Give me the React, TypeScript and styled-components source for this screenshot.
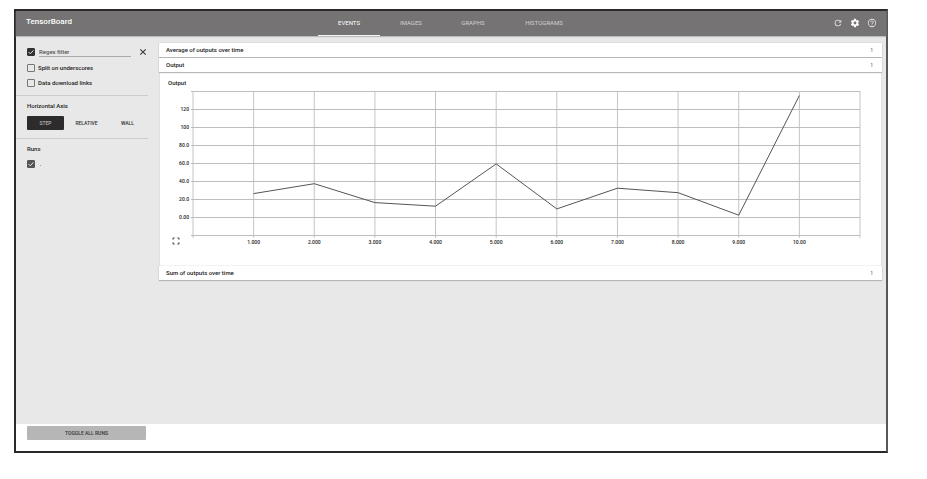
import React, { useState } from "react";
import styled, { createGlobalStyle } from "styled-components";

const Global = createGlobalStyle`
  * { box-sizing: border-box; }
  body { margin: 0; background: #fff; font-family: Roboto, "Liberation Sans", sans-serif; color: #222; -webkit-font-smoothing: antialiased; }
  button, input { font: inherit; color: inherit; margin: 0; padding: 0; border: 0; background: none; }
`;

const Frame = styled.div`
  display: flex;
  flex-direction: column;
  min-height: calc(100vh - 35px);
  margin: 9px 39px 26px 14px;
  border: 2px solid #2b2829;
  border-right-color: #58585a;
`;

const Header = styled.header`
  position: relative;
  display: grid;
  grid-template-columns: 302px 1fr auto;
  height: 25px;
  background: #757373;
  box-shadow: 0 1px 1px #bbb;
  color: #fff;
`;

const Brand = styled.h1`
  margin: 0;
  padding-left: 10px;
  font-size: 8px;
  font-weight: 500;
  line-height: 22px;
`;

const Tabs = styled.nav`
  display: flex;
`;

const Tab = styled.button<{ $active: boolean; $wide?: boolean }>`
  width: ${(p) => (p.$wide ? 80 : 62)}px;
  padding-bottom: 1px;
  border-bottom: 1px solid ${(p) => (p.$active ? "#f4f4f4" : "transparent")};
  color: ${(p) => (p.$active ? "#fff" : "#d2d1d1")};
  font-size: 6px;
  font-weight: 400;
`;

const Actions = styled.div`
  display: flex;
  align-items: center;
  gap: 7px;
  padding: 0 9px 2px 0;
`;

const IconButton = styled.button`
  display: flex;
  svg { display: block; width: 10px; height: 10px; }
`;

const Main = styled.div`
  flex: 1;
  display: grid;
  grid-template-columns: 132px minmax(0, 1fr);
  gap: 11px;
  padding-right: 4px;
  background: #e8e8e8;
`;

const Sidebar = styled.aside`
  font-size: 6px;
  font-weight: 500;
`;

const Section = styled.section`
  padding: 6px 0 0 11px;
  border-bottom: 1px solid #cdcdcd;
  &:first-child { padding: 10px 0 2px 11px; }
  &:last-child { border-bottom: 0; }
`;

const FilterRow = styled.div`
  display: flex;
  align-items: center;
  height: 11px;
  margin-bottom: 6px;
`;

const RegexInput = styled.input`
  width: 95px;
  height: 11px;
  margin: 0 7px 0 4px;
  border-bottom: 1px solid #aaa;
  outline: 0;
  &::placeholder { color: #555; opacity: 1; }
`;

const CheckRow = styled.label`
  display: flex;
  align-items: center;
  gap: 3px;
  height: 9px;
  margin-bottom: 6px;
`;

const Check = styled.input<{ $tone?: string }>`
  appearance: none;
  flex: none;
  width: 8px;
  height: 8px;
  border: 1px solid #777;
  border-radius: 1px;
  &:checked {
    border-color: ${(p) => p.$tone || "#333"};
    background: ${(p) => p.$tone || "#333"}
      url("data:image/svg+xml,%3Csvg xmlns='http://www.w3.org/2000/svg' viewBox='0 0 6 6'%3E%3Cpath d='M.6 3.1 2.2 4.7 5.5 1.4' fill='none' stroke='white' stroke-width='.9'/%3E%3C/svg%3E");
  }
`;

const Heading = styled.h2`
  margin: 0 0 6px;
  font-size: 6px;
  font-weight: 500;
  line-height: 8px;
`;

const AxisGroup = styled.div`
  display: flex;
  gap: 4px;
  margin-bottom: 8px;
`;

const AxisButton = styled.button<{ $active: boolean }>`
  width: 37px;
  height: 14px;
  border-radius: 1px;
  background: ${(p) => (p.$active ? "#2e2b2c" : "transparent")};
  color: ${(p) => (p.$active ? "#ccc" : "#333")};
  font-size: 5px;
  font-weight: ${(p) => (p.$active ? 400 : 500)};
`;

const Content = styled.main`
  padding-top: 7px;
`;

const Category = styled.button`
  position: relative;
  display: flex;
  justify-content: space-between;
  align-items: center;
  width: 100%;
  height: 14px;
  margin-bottom: 1px;
  padding: 0 9px 1px 7px;
  background: #fff;
  box-shadow: 0 0 1px #b0b0b0, 0 1px 1px #b8b8b8;
  font-size: 6px;
  font-weight: 500;
`;

const Count = styled.span`
  color: #777;
  font-size: 5px;
`;

const ChartCard = styled.section`
  height: 193px;
  margin: 0 1px;
  padding: 6px 21px 0 8px;
  background: #fff;
  box-shadow: 0 0 1px #bbb;
`;

const ChartTitle = styled.h3`
  margin: 0 0 4px;
  font-size: 6px;
  font-weight: 500;
  line-height: 8px;
`;

const ChartBody = styled.div`
  display: grid;
  grid-template-columns: 25px minmax(0, 1fr);
  color: #222;
`;

const YAxis = styled.div`
  display: flex;
  flex-direction: column;
  padding: 9px 4px 0 0;
  text-align: right;
  font-size: 5px;
  font-weight: 500;
  line-height: 18px;
  button { margin: 11px 0 0 4px; }
  svg { width: 8px; height: 8px; }
`;

const Plot = styled.svg`
  display: block;
  width: 100%;
  height: 160px;
  overflow: visible;
  line, polyline { vector-effect: non-scaling-stroke; }
  text { font-size: 5px; font-weight: 500; fill: #222; text-anchor: middle; }
`;

const Footer = styled.footer`
  height: 27px;
  padding: 2px 11px;
`;

const ToggleButton = styled.button`
  display: block;
  width: 119px;
  height: 14px;
  border-radius: 1px;
  background: #b6b6b6;
  color: #333;
  font-size: 5px;
  font-weight: 500;
`;

const RefreshIcon = () => (
  <svg viewBox="0 0 24 24" fill="#e2e2e2"><path d="M17.65 6.35A7.96 7.96 0 0 0 12 4a8 8 0 1 0 7.73 10h-2.08A6 6 0 1 1 12 6c1.66 0 3.14.69 4.22 1.78L13 11h7V4z" /></svg>
);
const GearIcon = () => (
  <svg viewBox="0 0 24 24" fill="#fff"><path d="M19.43 12.98c.04-.32.07-.64.07-.98s-.03-.66-.07-.98l2.11-1.65c.19-.15.24-.42.12-.64l-2-3.46c-.12-.22-.39-.3-.61-.22l-2.49 1c-.52-.4-1.08-.73-1.69-.98l-.38-2.65A.49.49 0 0 0 14 2h-4c-.25 0-.46.18-.49.42l-.38 2.65c-.61.25-1.17.59-1.69.98l-2.49-1c-.23-.09-.49 0-.61.22l-2 3.46c-.13.22-.07.49.12.64l2.11 1.65c-.04.32-.07.65-.07.98s.03.66.07.98l-2.11 1.65c-.19.15-.24.42-.12.64l2 3.46c.12.22.39.3.61.22l2.49-1c.52.4 1.08.73 1.69.98l.38 2.65c.03.24.24.42.49.42h4c.25 0 .46-.18.49-.42l.38-2.65c.61-.25 1.17-.59 1.69-.98l2.49 1c.23.09.49 0 .61-.22l2-3.46c.12-.22.07-.49-.12-.64zM12 15.5a3.5 3.5 0 1 1 0-7 3.5 3.5 0 0 1 0 7z" /></svg>
);
const HelpIcon = () => (
  <svg viewBox="0 0 24 24" fill="#e2e2e2"><path d="M11 18h2v-2h-2zm1-16a10 10 0 1 0 0 20 10 10 0 0 0 0-20zm0 18a8 8 0 1 1 0-16 8 8 0 0 1 0 16zm0-14a4 4 0 0 0-4 4h2a2 2 0 1 1 4 0c0 2-3 1.75-3 5h2c0-2.25 3-2.5 3-5a4 4 0 0 0-4-4z" /></svg>
);
const CloseIcon = () => (
  <svg viewBox="0 0 24 24" fill="none" stroke="#333" strokeWidth="2.5"><path d="M5.5 5.5l13 13M18.5 5.5l-13 13" /></svg>
);
const ExpandIcon = () => (
  <svg viewBox="0 0 24 24" fill="none" stroke="#222" strokeWidth="2.5"><path d="M3 8V3h5M16 3h5v5M21 16v5h-5M8 21H3v-5" /></svg>
);

const tabs = ["EVENTS", "IMAGES", "GRAPHS", "HISTOGRAMS"];
const axes = ["STEP", "RELATIVE", "WALL"];
const yLabels = ["120", "100", "80.0", "60.0", "40.0", "20.0", "0.00"];
const values = [26, 37, 16, 12, 59, 9, 32, 27, 2, 135];
const steps = values.map((_, i) => i + 1);
const X_MAX = 11;
const PLOT_HEIGHT = 144;
const toY = (value: number) => ((140 - value) * PLOT_HEIGHT) / 160;
const toX = (step: number) => `${(step / X_MAX) * 100}%`;

function OutputChart() {
  return (
    <Plot role="img" aria-label="Output by step">
      {[0, ...steps, X_MAX].map((s) => (
        <line key={s} x1={toX(s)} x2={toX(s)} y1="0" y2="147" stroke="#c4c4c4" />
      ))}
      {Array.from({ length: 9 }, (_, i) => (
        <line key={i} x1="-2" x2="100%" y1={i * 18 + 0.5} y2={i * 18 + 0.5} stroke="#bdbdbd" />
      ))}
      <svg width="100%" height={PLOT_HEIGHT} viewBox={`0 0 ${X_MAX} ${PLOT_HEIGHT}`} preserveAspectRatio="none">
        <polyline points={values.map((v, i) => `${i + 1},${toY(v)}`).join(" ")} fill="none" stroke="#555" />
      </svg>
      {steps.map((s) => (
        <text key={s} x={toX(s)} y="153">{s === 10 ? "10.00" : `${s}.000`}</text>
      ))}
    </Plot>
  );
}

export default function App() {
  const [tab, setTab] = useState("EVENTS");
  const [axis, setAxis] = useState("STEP");
  const [filter, setFilter] = useState("");
  const [run, setRun] = useState(true);
  return (
    <>
      <Global />
      <Frame>
        <Header>
          <Brand>TensorBoard</Brand>
          <Tabs>
            {tabs.map((t) => (
              <Tab key={t} $active={t === tab} $wide={t === "HISTOGRAMS"} onClick={() => setTab(t)}>{t}</Tab>
            ))}
          </Tabs>
          <Actions>
            <IconButton aria-label="Refresh"><RefreshIcon /></IconButton>
            <IconButton aria-label="Settings"><GearIcon /></IconButton>
            <IconButton aria-label="Help"><HelpIcon /></IconButton>
          </Actions>
        </Header>
        <Main>
          <Sidebar>
            <Section>
              <FilterRow>
                <Check type="checkbox" defaultChecked aria-label="Enable regex filter" />
                <RegexInput aria-label="Regex filter" placeholder="Regex filter" value={filter} onChange={(e) => setFilter(e.target.value)} />
                <IconButton aria-label="Clear filter" onClick={() => setFilter("")}><CloseIcon /></IconButton>
              </FilterRow>
              <CheckRow><Check type="checkbox" />Split on underscores</CheckRow>
              <CheckRow><Check type="checkbox" />Data download links</CheckRow>
            </Section>
            <Section>
              <Heading>Horizontal Axis</Heading>
              <AxisGroup>
                {axes.map((a) => (
                  <AxisButton key={a} $active={a === axis} onClick={() => setAxis(a)}>{a}</AxisButton>
                ))}
              </AxisGroup>
            </Section>
            <Section>
              <Heading>Runs</Heading>
              <CheckRow><Check type="checkbox" $tone="#555" checked={run} onChange={() => setRun(!run)} />&nbsp;.</CheckRow>
            </Section>
          </Sidebar>
          <Content>
            <Category>Average of outputs over time<Count>1</Count></Category>
            <Category>Output<Count>1</Count></Category>
            <ChartCard>
              <ChartTitle>Output</ChartTitle>
              <ChartBody>
                <YAxis>
                  {yLabels.map((l) => <span key={l}>{l}</span>)}
                  <IconButton aria-label="Expand chart"><ExpandIcon /></IconButton>
                </YAxis>
                <OutputChart />
              </ChartBody>
            </ChartCard>
            <Category>Sum of outputs over time<Count>1</Count></Category>
          </Content>
        </Main>
        <Footer>
          <ToggleButton onClick={() => setRun(!run)}>TOGGLE ALL RUNS</ToggleButton>
        </Footer>
      </Frame>
    </>
  );
}
